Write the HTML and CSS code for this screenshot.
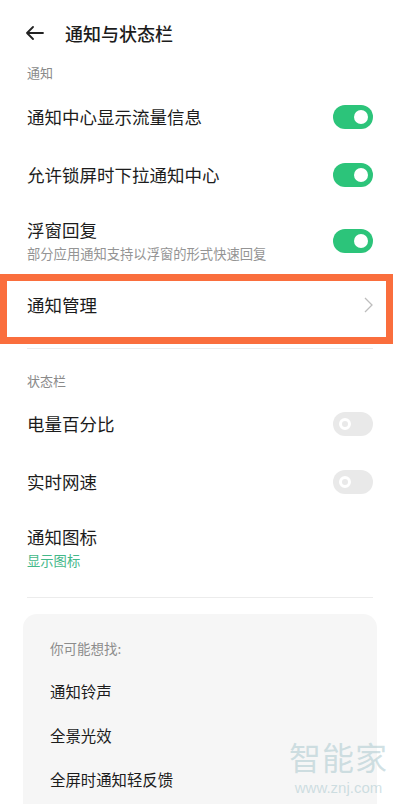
FILE: index.html
```html
<!DOCTYPE html>
<html lang="zh-CN">
<head>
<meta charset="UTF-8">
<meta name="viewport" content="width=device-width, initial-scale=1.0">
<title>通知与状态栏</title>
<link rel="stylesheet" href="styles.css">
</head>
<body>
<div class="page">
    <header class="top-bar">
        <svg class="back-icon" width="18" height="14" viewBox="0 0 18 14">
            <path d="M1 7 H17 M7 1 L1 7 L7 13" fill="none" stroke="#222" stroke-width="1.8" stroke-linecap="round" stroke-linejoin="round"/>
        </svg>
        <h1>通知与状态栏</h1>
    </header>

    <div class="group-label">通知</div>

    <div class="row">
        <span class="row-title">通知中心显示流量信息</span>
        <span class="switch on"></span>
    </div>
    <div class="row">
        <span class="row-title">允许锁屏时下拉通知中心</span>
        <span class="switch on"></span>
    </div>
    <div class="row row-double">
        <div class="row-text">
            <div class="row-title">浮窗回复</div>
            <div class="row-sub">部分应用通知支持以浮窗的形式快速回复</div>
        </div>
        <span class="switch on"></span>
    </div>

    <div class="highlight">
        <span class="row-title">通知管理</span>
        <svg class="chevron" width="9" height="16" viewBox="0 0 9 16">
            <path d="M1 1 L8 8 L1 15" fill="none" stroke="#bdbdbd" stroke-width="1.3"/>
        </svg>
    </div>

    <div class="divider first"></div>

    <div class="group-label status">状态栏</div>

    <div class="row">
        <span class="row-title">电量百分比</span>
        <span class="switch"></span>
    </div>
    <div class="row">
        <span class="row-title">实时网速</span>
        <span class="switch"></span>
    </div>
    <div class="row row-double last">
        <div class="row-text">
            <div class="row-title">通知图标</div>
            <div class="row-sub green">显示图标</div>
        </div>
    </div>

    <div class="divider"></div>

    <div class="suggest">
        <div class="suggest-label">你可能想找:</div>
        <div class="suggest-item">通知铃声</div>
        <div class="suggest-item">全景光效</div>
        <div class="suggest-item">全屏时通知轻反馈</div>
    </div>

    <div class="watermark">
        <div class="wm-name">智能家</div>
        <div class="wm-url">www.znj.com</div>
    </div>
</div>
</body>
</html>
```

FILE: styles.css
```css
body {
    margin: 0;
    padding: 0;
    background-color: #fff;
    font-family: "Noto Sans CJK SC", "Noto Sans", sans-serif;
    color: #1c1c1c;
}
.page {
    position: relative;
    width: 400px;
    height: 804px;
    overflow: hidden;
}
.top-bar {
    display: flex;
    align-items: center;
    height: 50px;
    margin-top: 8px;
    padding-left: 26px;
}
.back-icon {
    display: block;
}
.top-bar h1 {
    margin: 0 0 0 21px;
    font-size: 18px;
    font-weight: 500;
    line-height: 24px;
}
.group-label {
    padding: 5px 27px 5px;
    font-size: 13px;
    line-height: 20px;
    color: #8a8a8a;
}
.group-label.status {
    padding-top: 22px;
    padding-bottom: 4px;
}
.row {
    display: flex;
    align-items: center;
    justify-content: space-between;
    height: 58px;
    padding: 0 27px;
    box-sizing: border-box;
}
.row-double {
    height: 70px;
    padding-top: 14px;
    padding-bottom: 11px;
}
.row-double.last {
    height: 86px;
    align-items: flex-start;
}
.row-title {
    font-size: 17.5px;
    line-height: 24px;
}
.row-sub {
    margin-top: 3px;
    font-size: 13.3px;
    line-height: 18px;
    color: #949494;
}
.row-sub.green {
    color: #43b889;
}
.switch {
    position: relative;
    flex: none;
    width: 40px;
    height: 24px;
    border-radius: 12px;
    background-color: #e9e9e9;
}
.switch::after {
    content: "";
    position: absolute;
    left: 6px;
    top: 6px;
    width: 6px;
    height: 6px;
    border: 3px solid #fff;
    border-radius: 50%;
}
.switch.on {
    background-color: #2cc47a;
}
.switch.on::after {
    left: 21px;
    top: 5px;
    width: 14px;
    height: 14px;
    border: none;
    background-color: #fff;
}
.highlight {
    display: flex;
    align-items: center;
    justify-content: space-between;
    width: 393px;
    height: 70px;
    box-sizing: border-box;
    border: 7px solid #fa6e3d;
    padding: 0 13px 8px 20px;
}
.chevron {
    display: block;
}
.divider {
    height: 1px;
    margin: 0 27px;
    background-color: #ececec;
}
.divider.first {
    margin-top: 4px;
}
.suggest {
    margin: 16px 23px 0;
    padding: 24px 27px 20px;
    border-radius: 14px;
    background-color: #f6f6f6;
    height: 300px;
}
.suggest-label {
    width: fit-content;
    font-size: 13.5px;
    line-height: 20px;
    color: #8c8c8c;
    margin-bottom: 11px;
}
.suggest-item {
    width: fit-content;
    font-size: 15.4px;
    line-height: 44px;
}
.watermark {
    position: absolute;
    right: 12px;
    bottom: 8px;
    text-align: center;
    color: rgba(170, 200, 206, 0.55);
}
.wm-name {
    font-size: 32px;
    line-height: 40px;
    letter-spacing: 1px;
    margin-bottom: 4px;
}
.wm-url {
    font-family: "Liberation Sans", sans-serif;
    font-size: 15px;
    line-height: 16px;
}
```
